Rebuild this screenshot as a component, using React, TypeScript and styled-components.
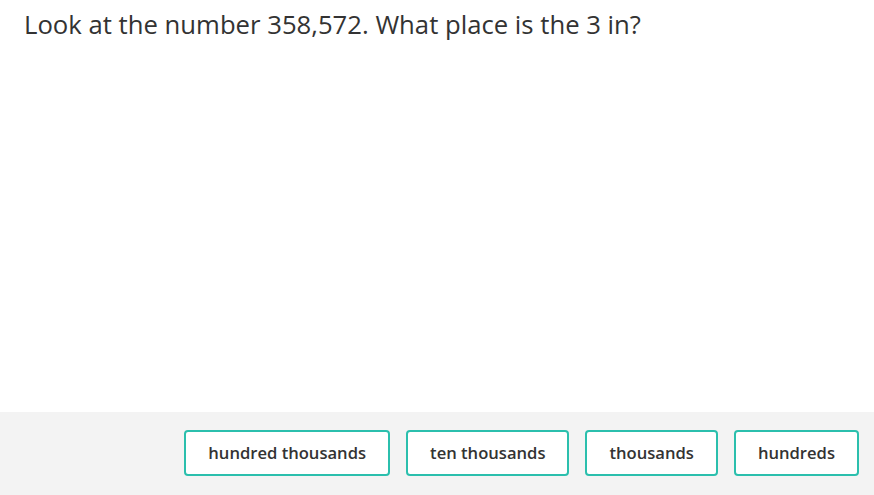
import React from "react";
import styled, { createGlobalStyle } from "styled-components";

const Global = createGlobalStyle`
  html, body { margin: 0; padding: 0; background: #fff; }
  body { font-family: "Open Sans", "Noto Sans", sans-serif; }
`;

const Page = styled.div`
  width: 874px;
  height: 495px;
  display: flex;
  flex-direction: column;
  overflow: hidden;
`;

const Question = styled.div`
  flex: 1;
  padding: 6px 24px 0;
  font-size: 25.7px;
  line-height: 38px;
  color: #333;
`;

const Footer = styled.div`
  height: 83px;
  background: #f3f3f3;
  display: flex;
  justify-content: flex-end;
  align-items: flex-start;
  gap: 16px;
  padding: 18px 15px 0 0;
  box-sizing: border-box;
`;

const Choice = styled.button`
  height: 46px;
  padding: 0 22px 2px;
  border: 2px solid #2bbfad;
  border-radius: 4px;
  background: #fff;
  font-family: "Open Sans", "Noto Sans", sans-serif;
  font-size: 16.6px;
  font-weight: 600;
  color: #333;
  cursor: pointer;
`;

const choices = ["hundred thousands", "ten thousands", "thousands", "hundreds"];

export default function App() {
  return (
    <Page>
      <Global />
      <Question>Look at the number 358,572. What place is the 3 in?</Question>
      <Footer>
        {choices.map((c) => (
          <Choice key={c}>{c}</Choice>
        ))}
      </Footer>
    </Page>
  );
}
